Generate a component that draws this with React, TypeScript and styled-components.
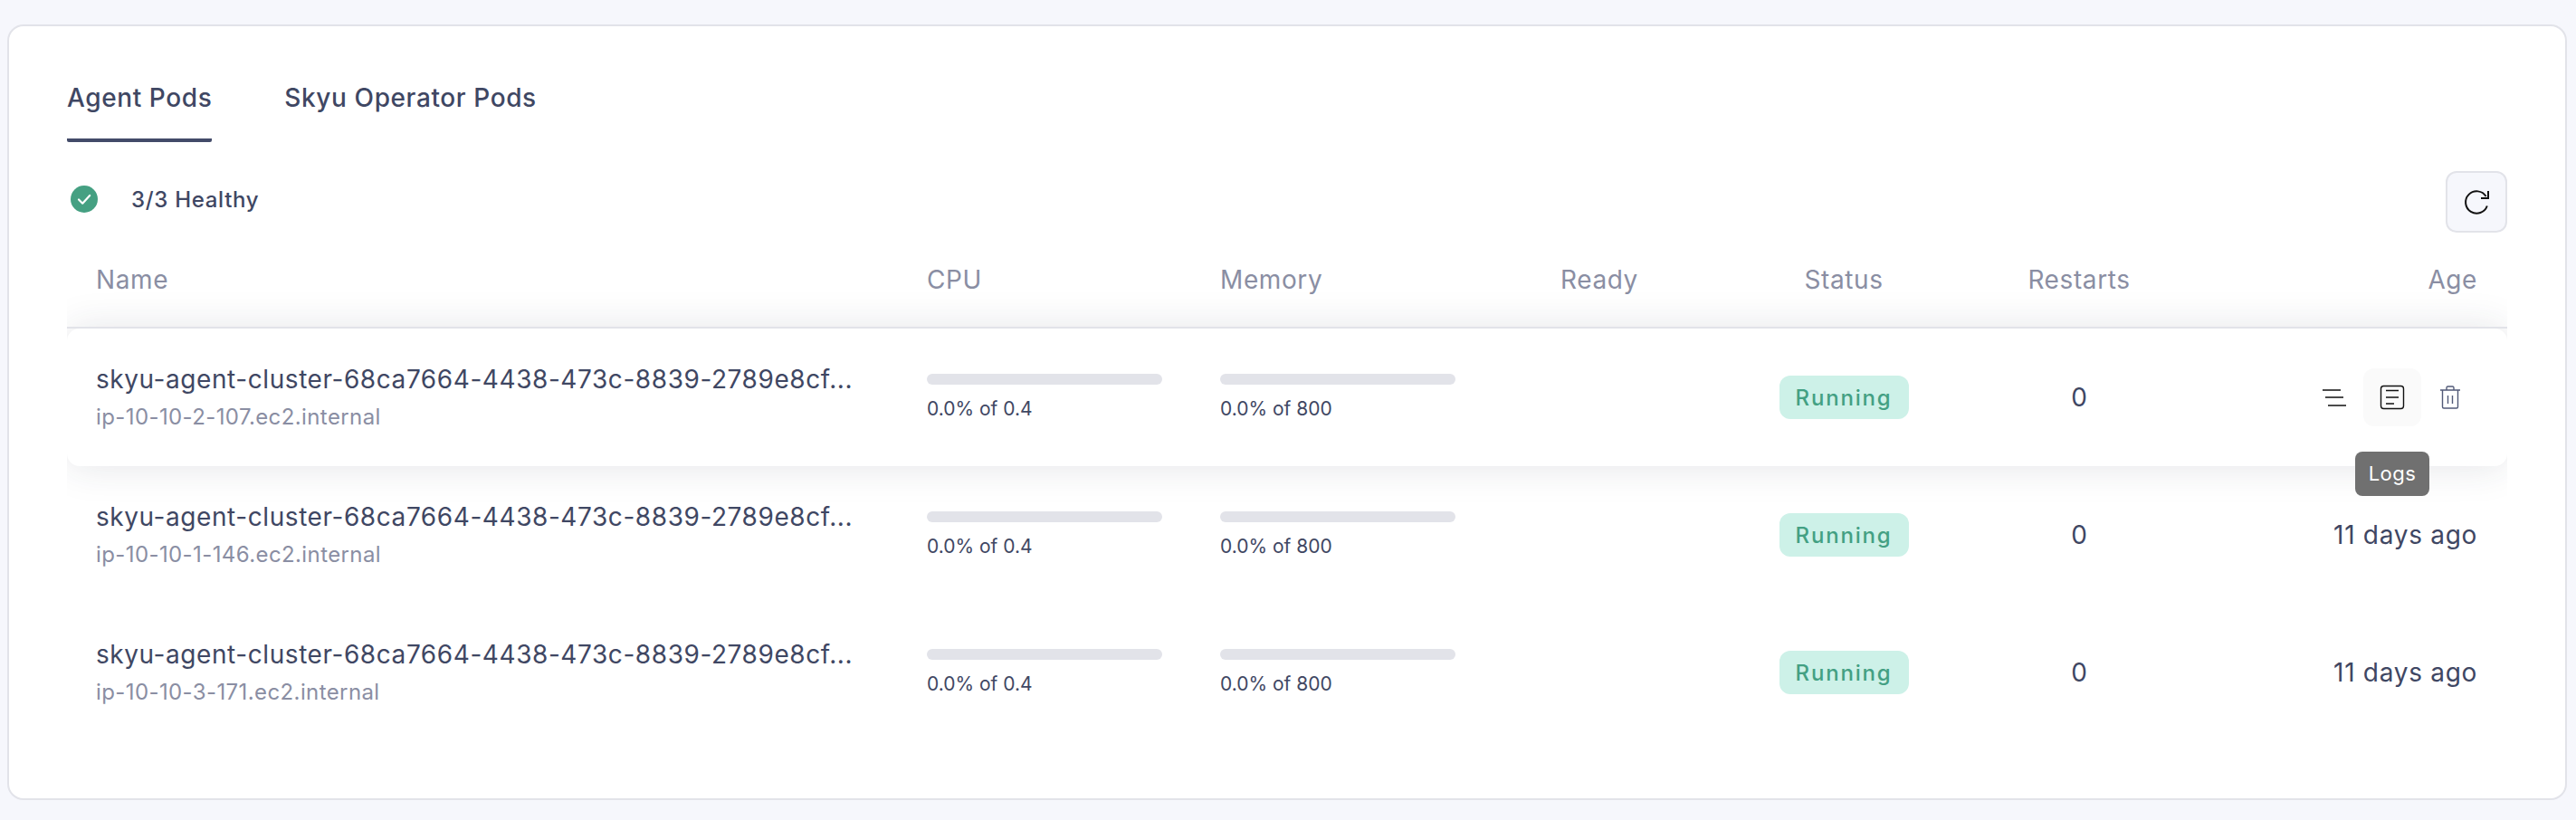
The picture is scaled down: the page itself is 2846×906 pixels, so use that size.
import styled, { createGlobalStyle } from 'styled-components';

const GlobalStyle = createGlobalStyle`
  * {
    box-sizing: border-box;
  }
  body {
    margin: 0;
    background-color: #f6f7fc;
    font-family: 'Inter', 'Liberation Sans', sans-serif;
    color: #3f4763;
  }
`;

const Page = styled.div`
  padding: 27px 10px 22px 8px;
`;

const Card = styled.div`
  height: 857px;
  padding: 0 64px;
  background-color: #fff;
  border: 2px solid #e2e3e9;
  border-radius: 18px;
`;

const Tabs = styled.div`
  display: flex;
  gap: 80px;
  height: 128px;
  padding-top: 54px;
`;

const Tab = styled.div<{ $active?: boolean }>`
  height: 74px;
  font-size: 28px;
  font-weight: 500;
  line-height: 50px;
  letter-spacing: 0.6px;
  border-bottom: 4px solid ${(p) => (p.$active ? '#434b69' : 'transparent')};
  border-radius: 2px;
`;

const Toolbar = styled.div`
  display: flex;
  align-items: center;
  justify-content: space-between;
  height: 68px;
  margin-top: 32px;
`;

const Health = styled.div`
  display: flex;
  align-items: center;
  gap: 37px;
  margin-top: -6px;
  padding-left: 4px;
  font-size: 24px;
  font-weight: 500;
  letter-spacing: 0.7px;
`;

const RefreshButton = styled.button`
  display: flex;
  align-items: center;
  justify-content: center;
  width: 68px;
  height: 68px;
  padding: 0;
  background-color: #f6f7fc;
  border: 2px solid #e2e3e9;
  border-radius: 12px;
`;

const TableWrap = styled.div`
  overflow: hidden;
`;

const columns = '918px 324px 376px 226px 174px 346px 267px';

const HeadRow = styled.div`
  position: relative;
  z-index: 2;
  display: grid;
  grid-template-columns: ${columns};
  align-items: center;
  height: 106px;
  padding: 0 33px 0 32px;
  border-bottom: 2px solid #e2e3e9;
  color: #8a8ea3;
  font-size: 28px;
  letter-spacing: 0.6px;
`;

const HeadCell = styled.div<{ $align?: string }>`
  text-align: ${(p) => p.$align || 'left'};
`;

const Row = styled.div<{ $hover?: boolean }>`
  position: relative;
  z-index: ${(p) => (p.$hover ? 1 : 0)};
  display: grid;
  grid-template-columns: ${columns};
  align-items: center;
  height: 152px;
  padding: 0 33px 0 32px;
  border-radius: 14px;
  box-shadow: ${(p) => (p.$hover ? '0 0 44px rgba(40, 44, 70, 0.13)' : 'none')};
  background-color: ${(p) => (p.$hover ? '#fff' : 'transparent')};
`;

const PodName = styled.div`
  font-size: 28px;
  line-height: 38px;
  letter-spacing: 0.57px;
  white-space: nowrap;
`;

const PodHost = styled.div`
  margin-top: 6px;
  color: #8a8ea3;
  font-size: 24px;
  line-height: 34px;
  letter-spacing: 0.4px;
`;

const Usage = styled.div`
  margin-top: 2px;
`;

const Track = styled.div`
  width: 260px;
  height: 12px;
  background-color: #e2e3e9;
  border-radius: 6px;
`;

const Fill = styled.div`
  height: 100%;
  background-color: #41a184;
  border-radius: 6px;
`;

const UsageText = styled.div`
  margin-top: 12px;
  font-size: 21px;
  line-height: 30px;
`;

const Center = styled.div`
  display: flex;
  justify-content: center;
  font-size: 28px;
`;

const Badge = styled.span`
  display: inline-flex;
  align-items: center;
  justify-content: center;
  width: 143px;
  height: 48px;
  background-color: #cdf1e8;
  border-radius: 12px;
  color: #43a083;
  font-size: 24px;
  font-weight: 500;
  letter-spacing: 1.8px;
`;

const Age = styled.div`
  text-align: right;
  font-size: 28px;
  letter-spacing: 0.7px;
`;

const Actions = styled.div`
  display: flex;
  justify-content: flex-end;
  margin-right: -2px;
`;

const ActionButton = styled.div<{ $active?: boolean }>`
  position: relative;
  display: flex;
  align-items: center;
  justify-content: center;
  width: 64px;
  height: 64px;
  background-color: ${(p) => (p.$active ? '#fafafa' : 'transparent')};
  border-radius: 12px;
`;

const Tooltip = styled.div`
  position: absolute;
  top: 92px;
  left: 50%;
  transform: translateX(-50%);
  width: 82px;
  height: 49px;
  background-color: #707070;
  border-radius: 8px;
  color: #fff;
  font-size: 22px;
  line-height: 49px;
  letter-spacing: 0.5px;
  text-align: center;
`;

function CheckIcon() {
  return (
    <svg width="30" height="30" viewBox="0 0 30 30">
      <circle cx="15" cy="15" r="15" fill="#45a082" />
      <path d="M9 15.5l4.2 4.2L21.2 11" fill="none" stroke="#fff" strokeWidth="2.2" strokeLinecap="round" strokeLinejoin="round" />
    </svg>
  );
}

function RefreshIcon() {
  return (
    <svg width="32" height="32" viewBox="0 0 32 32" fill="none" stroke="#111" strokeWidth="2">
      <path d="M27.8 20.5A12.2 12.2 0 1 1 26.6 10" />
      <path d="M29 4v8h-8" />
    </svg>
  );
}

function LinesIcon() {
  return (
    <svg width="28" height="28" viewBox="0 0 28 28" stroke="#111" strokeWidth="1.4">
      <path d="M1 6h20M4 14h20M7 23h20" />
    </svg>
  );
}

function LogsIcon() {
  return (
    <svg width="28" height="28" viewBox="0 0 28 28" fill="none" stroke="#111" strokeWidth="1.4">
      <rect x="1.5" y="1.5" width="25" height="25" rx="3" />
      <path d="M7 6.5h14M7 14h14M7 21h9" />
    </svg>
  );
}

function TrashIcon() {
  return (
    <svg width="28" height="28" viewBox="0 0 28 28" fill="none" stroke="#525a78" strokeWidth="1.4">
      <path d="M3 6h22M10 6V3.5A1.5 1.5 0 0 1 11.5 2h5A1.5 1.5 0 0 1 18 3.5V6" />
      <path d="M5.5 6v18.5A1.5 1.5 0 0 0 7 26h14a1.5 1.5 0 0 0 1.5-1.5V6" />
      <path d="M11.5 12v9M16.5 12v9" />
    </svg>
  );
}

const pods = [
  { host: 'ip-10-10-2-107.ec2.internal', age: '11 days ago', hover: true },
  { host: 'ip-10-10-1-146.ec2.internal', age: '11 days ago', hover: false },
  { host: 'ip-10-10-3-171.ec2.internal', age: '11 days ago', hover: false },
];

function App() {
  return (
    <>
      <GlobalStyle />
      <Page>
        <Card>
          <Tabs>
            <Tab $active>Agent Pods</Tab>
            <Tab>Skyu Operator Pods</Tab>
          </Tabs>
          <Toolbar>
            <Health>
              <CheckIcon />
              3/3 Healthy
            </Health>
            <RefreshButton>
              <RefreshIcon />
            </RefreshButton>
          </Toolbar>
          <TableWrap>
            <HeadRow>
              <HeadCell>Name</HeadCell>
              <HeadCell>CPU</HeadCell>
              <HeadCell>Memory</HeadCell>
              <HeadCell>Ready</HeadCell>
              <HeadCell $align="center">Status</HeadCell>
              <HeadCell $align="center">Restarts</HeadCell>
              <HeadCell $align="right">Age</HeadCell>
            </HeadRow>
            {pods.map((pod) => {
              return (
                <Row key={pod.host} $hover={pod.hover}>
                  <div>
                    <PodName>skyu-agent-cluster-68ca7664-4438-473c-8839-2789e8cf...</PodName>
                    <PodHost>{pod.host}</PodHost>
                  </div>
                  <Usage>
                    <Track>
                      <Fill style={{ width: '0%' }} />
                    </Track>
                    <UsageText>0.0% of 0.4</UsageText>
                  </Usage>
                  <Usage>
                    <Track>
                      <Fill style={{ width: '0%' }} />
                    </Track>
                    <UsageText>0.0% of 800</UsageText>
                  </Usage>
                  <div />
                  <Center>
                    <Badge>Running</Badge>
                  </Center>
                  <Center>0</Center>
                  {pod.hover ? (
                    <Actions>
                      <ActionButton>
                        <LinesIcon />
                      </ActionButton>
                      <ActionButton $active>
                        <LogsIcon />
                        <Tooltip>Logs</Tooltip>
                      </ActionButton>
                      <ActionButton>
                        <TrashIcon />
                      </ActionButton>
                    </Actions>
                  ) : (
                    <Age>{pod.age}</Age>
                  )}
                </Row>
              );
            })}
          </TableWrap>
        </Card>
      </Page>
    </>
  );
}

export default App;
